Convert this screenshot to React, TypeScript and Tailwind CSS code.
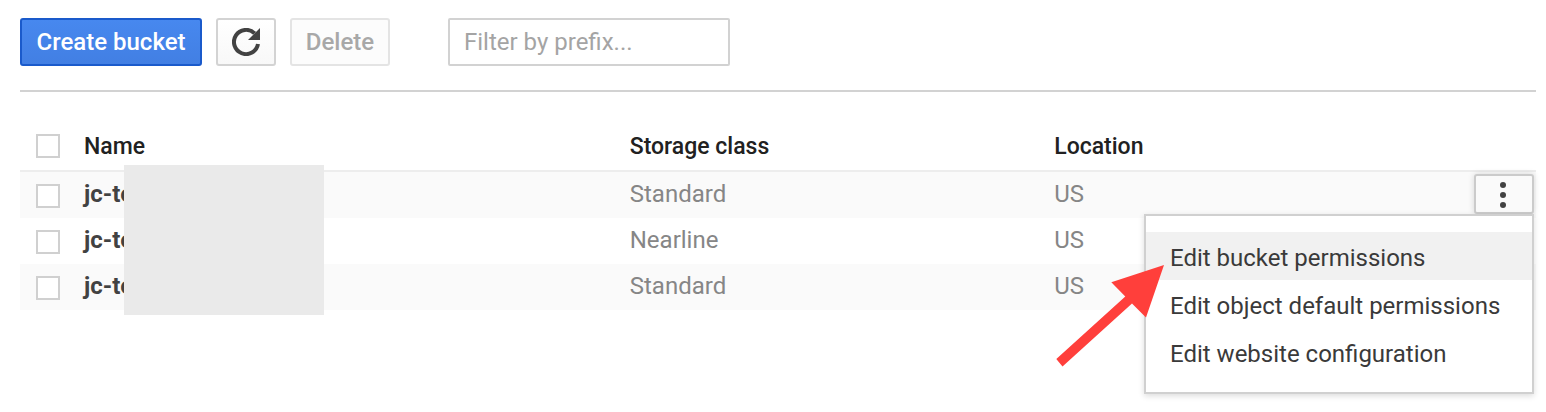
import React from 'react';

type Bucket = { name: string; storageClass: string; location: string };

const buckets: Bucket[] = [
  { name: 'jc-te', storageClass: 'Standard', location: 'US' },
  { name: 'jc-te', storageClass: 'Nearline', location: 'US' },
  { name: 'jc-te', storageClass: 'Standard', location: 'US' },
];

const actions = ['Edit bucket permissions', 'Edit object default permissions', 'Edit website configuration'];

function Checkbox({ label }: { label: string }) {
  return (
    <input
      type="checkbox"
      aria-label={label}
      className="block size-6 appearance-none border-2 border-[#d0d0d0] bg-white checked:bg-[#4285f4]"
    />
  );
}

function Toolbar() {
  return (
    <div className="flex items-center border-b-2 border-[#d2d2d2] pb-6">
      <button
        type="button"
        className="h-12 w-[182px] rounded-[3px] border-2 border-[#1a5acb] bg-linear-to-b from-[#4788ef] to-[#427fe3] whitespace-nowrap text-white"
      >
        Create bucket
      </button>
      <button
        type="button"
        aria-label="Refresh"
        className="ml-3.5 flex h-12 w-15 items-center justify-center rounded-[3px] border-2 border-[#d3d3d3] bg-linear-to-b from-white to-[#f8f8f8]"
      >
        <svg width="28" height="28" viewBox="0 0 28 28" aria-hidden="true">
          <path d="M22.6 5.4A12.1 12.1 0 1 0 26 16" fill="none" stroke="#424242" strokeWidth="4" />
          <path d="M28 0V12H16Z" fill="#424242" />
        </svg>
      </button>
      <button
        type="button"
        disabled
        className="ml-3.5 h-12 w-[100px] rounded-[3px] border-2 border-[#e4e4e4] bg-[#fcfcfc] text-[#a8a8a8]"
      >
        Delete
      </button>
      <input
        type="text"
        aria-label="Filter by prefix"
        placeholder="Filter by prefix..."
        className="ml-[58px] h-12 w-[282px] rounded-[2px] border-2 border-[#d2d2d2] px-3.5 font-normal placeholder:text-[#a4a4a4]"
      />
    </div>
  );
}

function RowMenu() {
  return (
    <div className="relative ml-auto h-10 w-15">
      <button
        type="button"
        aria-label="Bucket actions"
        aria-expanded="true"
        className="flex h-10 w-15 items-center justify-center rounded-[3px] border-2 border-[#cbcbcb] bg-[#fafafa] pt-0.5 pr-0.5 shadow-[0_0_6px_rgba(0,0,0,0.15)]"
      >
        <svg width="6" height="26" viewBox="0 0 6 26" fill="#424242" aria-hidden="true">
          <circle cx="3" cy="3" r="3" />
          <circle cx="3" cy="13" r="3" />
          <circle cx="3" cy="23" r="3" />
        </svg>
      </button>
      <ul
        role="menu"
        className="absolute top-full right-0 z-10 w-[390px] border-2 border-[#d0d0d0] bg-white py-4 shadow-[0_2px_6px_rgba(0,0,0,0.14)]"
      >
        {actions.map((action, i) => (
          <li key={action} role="none">
            <button
              type="button"
              role="menuitem"
              className={`block h-12 w-full pt-1 pl-6 text-left font-normal whitespace-nowrap text-[#3a3a3a] ${i === 0 ? 'bg-[#f1f1f1]' : 'bg-white'}`}
            >
              {action}
            </button>
          </li>
        ))}
      </ul>
      <svg
        className="absolute top-[91px] right-[370px] z-20"
        width="108"
        height="102"
        viewBox="0 0 108 102"
        aria-hidden="true"
      >
        <path d="M108 0L55.3 17.2L69.3 31.4L.3 94L6.5 101.6L76 38.6L90 52.5Z" fill="#ff3f3b" />
      </svg>
    </div>
  );
}

function BucketTable() {
  return (
    <table className="mt-7 w-full table-fixed border-separate border-spacing-0 text-left">
      <thead>
        <tr className="h-[52px] text-[23px] text-[#212121] *:border-b-2 *:border-[#ededed]">
          <th scope="col" className="w-16 p-0 pt-0.5 pl-4">
            <Checkbox label="Select all buckets" />
          </th>
          <th scope="col" className="w-[36%] p-0 pt-1 font-medium">Name</th>
          <th scope="col" className="w-[28%] p-0 pt-1 font-medium">Storage class</th>
          <th scope="col" className="p-0 pt-1 font-medium">Location</th>
          <th scope="col" className="w-16 p-0" aria-label="Actions" />
        </tr>
      </thead>
      <tbody>
        {buckets.map((bucket, i) => (
          <tr key={i} className="h-[46px] font-normal text-[#868686] odd:bg-[#fafafa]">
            <td className="p-0 pt-0.5 pl-4">
              <Checkbox label={`Select bucket ${i + 1}`} />
            </td>
            <td className="p-0 pb-0.5">
              <div className="relative">
                <a href="#bucket" className="font-bold text-[#424242]">
                  {bucket.name}
                </a>
                {i === 0 && <div className="absolute -top-[15px] left-10 z-10 h-[150px] w-[200px] bg-[#eaeaea]" />}
              </div>
            </td>
            <td className="p-0 pb-0.5">{bucket.storageClass}</td>
            <td className="p-0 pb-0.5">{bucket.location}</td>
            <td className="p-0 pr-0.5 pb-0.5">{i === 0 && <RowMenu />}</td>
          </tr>
        ))}
      </tbody>
    </table>
  );
}

export default function App() {
  return (
    <main className="min-h-screen bg-white pt-[18px] pr-2.5 pl-5 font-['Roboto',sans-serif] text-[24px] leading-7 font-medium">
      <Toolbar />
      <BucketTable />
    </main>
  );
}
